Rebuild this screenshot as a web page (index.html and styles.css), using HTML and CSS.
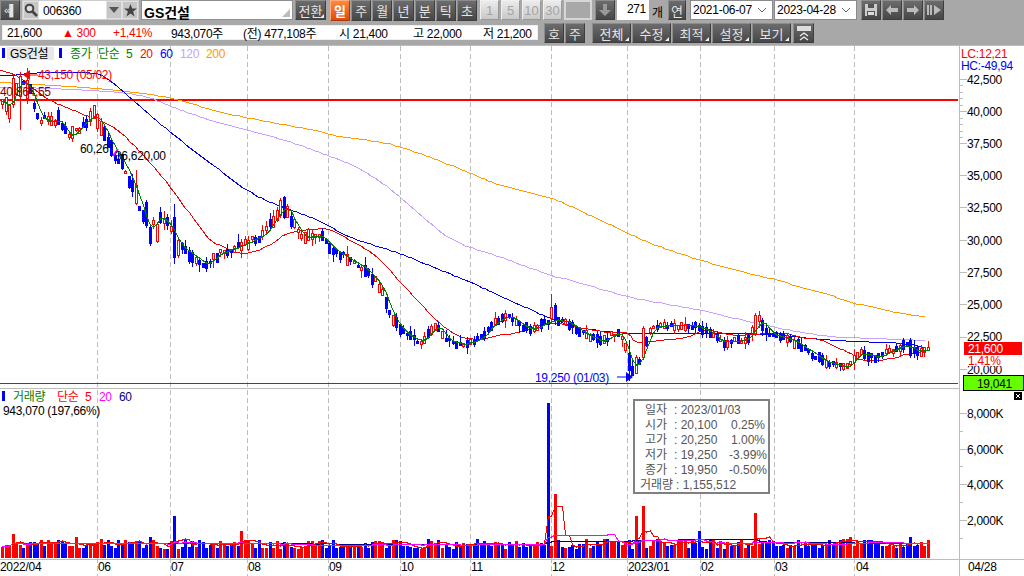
FILE: index.html
```html
<!DOCTYPE html>
<html lang="ko">
<head>
<meta charset="utf-8">
<title>GS건설 차트</title>
<link rel="stylesheet" href="styles.css">
</head>
<body>
<div class="toolbar">
  <div class="row row-top">
    <button class="btn collapse">«▌</button>
    <div class="code">
      <span class="code-icon"><svg width="14" height="14" viewBox="0 0 14 14"><circle cx="5.5" cy="5.5" r="3.8" fill="#ddd" stroke="#444" stroke-width="2"/><path d="M8.5 8.5L13 13" stroke="#444" stroke-width="2.6"/></svg></span>
      <span class="code-text">006360</span>
      <span class="code-icon"><svg width="10" height="6" viewBox="0 0 10 6"><path d="M0 0H10L5 6Z" fill="#555"/></svg></span>
      <span class="code-icon"><svg width="13" height="13" viewBox="0 0 13 13"><path d="M6.5 0L8.2 4.6H13L9.1 7.6L10.6 12.6L6.5 9.6L2.4 12.6L3.9 7.6L0 4.6H4.8Z" fill="#444"/></svg></span>
    </div>
    <div class="name">GS건설<svg class="corner" width="8" height="8" viewBox="0 0 8 8"><path d="M8 0V8H0Z" fill="#bbb"/></svg></div>
    <button class="btn swap">전환<i class="tri"></i></button>
    <div class="periods">
      <button class="btn active">일</button><button class="btn">주</button><button class="btn">월</button><button class="btn">년</button><button class="btn">분</button><button class="btn">틱</button><button class="btn">초</button>
    </div>
    <div class="mins">
      <button class="btn light">1</button><button class="btn light">5</button><button class="btn light">10</button><button class="btn light">30</button>
    </div>
    <div class="blank"></div>
    <button class="btn icon-btn"><svg width="12" height="12" viewBox="0 0 12 12"><path d="M4 0H8V6H12L6 12L0 6H4Z" fill="#999"/></svg></button>
    <div class="count">271</div>
    <span class="unit">개</span>
    <button class="btn yr">연</button>
    <div class="date">2021-06-07<svg width="10" height="6" viewBox="0 0 10 6"><path d="M1 1L5 5L9 1" fill="none" stroke="#666"/></svg></div>
    <div class="date">2023-04-28<svg width="10" height="6" viewBox="0 0 10 6"><path d="M1 1L5 5L9 1" fill="none" stroke="#666"/></svg></div>
    <div class="nav">
      <button class="btn icon-btn"><svg width="12" height="12" viewBox="0 0 12 12"><path d="M0 0H12V12H0Z" fill="#ccc"/><path d="M3 0H9V4H3ZM2 7H10V12H2Z" fill="#555"/><path d="M3 8H9V11H3Z" fill="#ddd"/></svg></button>
      <button class="btn icon-btn"><svg width="12" height="10" viewBox="0 0 12 10"><path d="M0 5L5 0V3H12V7H5V10Z" fill="#bbb"/></svg></button>
      <button class="btn icon-btn"><svg width="12" height="10" viewBox="0 0 12 10"><path d="M12 5L7 0V3H0V7H7V10Z" fill="#bbb"/></svg></button>
      <button class="btn icon-btn"><svg width="14" height="10" viewBox="0 0 14 10"><path d="M0 0H2V10H0ZM3 0H5V10H3ZM7 0L14 5L7 10Z" fill="#bbb"/></svg></button>
    </div>
  </div>
  <div class="row row-bottom">
    <div class="info">
      <span class="f1">21,600</span>
      <span class="f2 up">▲ 300</span>
      <span class="f3 up">+1,41%</span>
      <span class="f4">943,070주</span>
      <span class="f5">(전) 477,108주</span>
      <span class="f6">시 21,400</span>
      <span class="f7">고 22,000</span>
      <span class="f8">저 21,200</span>
    </div>
    <div class="pair">
      <button class="btn">호</button><button class="btn">주</button>
    </div>
    <div class="menus">
      <button class="btn menu">전체<i class="tri"></i></button>
      <button class="btn menu">수정<i class="tri"></i></button>
      <button class="btn menu">최적<i class="tri"></i></button>
      <button class="btn menu">설정<i class="tri"></i></button>
      <button class="btn menu">보기<i class="tri"></i></button>
      <button class="btn fold"><svg width="14" height="15" viewBox="0 0 14 15"><path d="M0 0H14V5H0Z" fill="#ddd"/><path d="M3 10L7 7L11 10M3 14L7 11L11 14" fill="none" stroke="#eee" stroke-width="1.3"/></svg></button>
    </div>
  </div>
</div>

<div class="chart">
  <svg class="plot" width="1024" height="530" viewBox="0 46 1024 530">
    <g class="grid">
      <path d="M97.5 46V576M170.5 46V576M247.5 46V576M328.5 46V576M400.5 46V576M470.5 46V576M551.5 46V576M627.5 46V576M700.5 46V576M774.5 46V576M854.5 46V576"/>
    </g>
    <g class="frame">
      <path d="M0 388.5H959M0 559.5H1024M959.5 46V576"/>
      <path id="ticks" d="M959 79.5H967M959 111.5H967M959 143.5H967M959 175.5H967M959 207.5H967M959 240.5H967M959 272.5H967M959 304.5H967M959 337.5H967M959 369.5H967M959 413.5H967M959 449.5H967M959 484.5H967M959 520.5H967M959 85.5H963M959 92.5H963M959 98.5H963M959 105.5H963M959 118.5H963M959 124.5H963M959 131.5H963M959 137.5H963M959 431.5H963M959 466.5H963M959 502.5H963M959 538.5H963"/>
    </g>
    <path class="hline" d="M0 100H958"/>
    <path class="hline-thin" d="M0 383.5H958"/>
    <polyline class="ma ma200 smooth" points="0,82 50,85 117,90 170,98 220,112 270,122 313,130 333,135 367,140 400,147 450,165 500,185 550,198 600,220 650,243 700,260 750,274 777,280 800,287 830,295 850,302 900,313 925,316"/>
    <polyline class="ma ma120 smooth" points="0,87 50,88 117,92 150,98 180,110 220,123 247,130 283,140 327,155 367,173 400,197 450,238 500,257 550,275 570,280 630,297 700,310 750,322 800,332 830,336 847,337 925,340"/>
    <polyline class="ma ma60 smooth" points="0,75 10,75 50,72 93,73 113,83 133,100 170,132 210,163 247,190 277,205 317,220 350,237 400,254 465,280 500,296 543,315 577,327 627,333 667,333 700,333 767,334 820,339 853,341 880,342 900,343 925,347"/>
    <polyline class="ma ma20 smooth" points="0,70 20,78 50,100 80,113 117,130 150,163 170,187 200,227 213,242 244,253 270,245 287,234 313,229 330,230 353,242 377,257 398,280 420,303 433,317 457,335 480,339 500,335 520,332 550,323 577,327 607,332 627,333 637,342 660,340 687,337 707,330 733,335 753,334 780,333 800,337 820,340 847,352 863,360 887,359 913,353 925,352"/>
    <g id="candles"></g>
    <polyline id="ma5" class="ma ma5" points=""></polyline>
    <g id="volumes"></g>
    <polyline id="vma60" class="ma vma60" points=""></polyline>
    <polyline id="vma5" class="ma vma5" points=""></polyline>
    <polyline id="vma20" class="ma vma20" points=""></polyline>
    <path class="peak-line" d="M113 156L118 149"/>
    <path class="marker red-fill" d="M23 75L30 70V80Z"/>
    <path class="marker-line red-line" d="M30 75H38"/>
    <path class="marker blue-fill" d="M633 377L626 372V382Z"/>
    <path class="marker-line blue-line" d="M617 377H627"/>

    <rect class="swatch" x="2" y="48" width="3" height="10"/>
    <rect class="tag-name" x="7" y="47" width="47" height="13"/>
    <text class="t" x="10" y="58">GS건설</text>
    <rect class="swatch" x="59" y="48" width="3" height="10"/>
    <text class="t green" x="70" y="58">종가</text>
    <text class="t green" x="98" y="58">단순</text>
    <text class="t green" x="126" y="58">5</text>
    <text class="t red" x="140" y="58">20</text>
    <text class="t blue" x="160" y="58">60</text>
    <text class="t purple" x="180" y="58">120</text>
    <text class="t orange" x="206" y="58">200</text>

    <text class="t red" x="38" y="79">43,150 (05/02)</text>
    <text class="t maroon" x="0" y="96">40,864,55</text>
    <text class="t" x="80" y="153">60,26°</text>
    <text class="t" x="115" y="160">36,620,00</text>
    <text class="t blue" x="535" y="382">19,250 (01/03)</text>

    <text class="t red" x="961" y="58">LC:12,21</text>
    <text class="t blue" x="961" y="70">HC:-49,94</text>
    <text class="t" x="967" y="84">42,500</text>
    <text class="t" x="967" y="116">40,000</text>
    <text class="t" x="967" y="148">37,500</text>
    <text class="t" x="967" y="180">35,000</text>
    <text class="t" x="967" y="212">32,500</text>
    <text class="t" x="967" y="245">30,000</text>
    <text class="t" x="967" y="277">27,500</text>
    <text class="t" x="967" y="309">25,000</text>
    <text class="t" x="967" y="341">22,500</text>
    <text class="t" x="967" y="374">20,000</text>

    <rect class="price-tag" x="964" y="342" width="58" height="13"/>
    <text class="t white" x="968" y="353">21,600</text>
    <rect class="tag-bg" x="964" y="355" width="58" height="11"/>
    <text class="t red" x="968" y="365">1,41%</text>
    <rect class="green-tag" x="963.5" y="375.5" width="60" height="15"/>
    <text class="t" x="977" y="388">19,041</text>
    <rect class="closer" x="1014" y="392" width="8" height="8"/>
    <path class="closer-x" d="M1016 394L1020 398M1020 394L1016 398"/>

    <rect class="swatch" x="2" y="391" width="3" height="10"/>
    <text class="t green" x="13" y="401">거래량</text>
    <text class="t red" x="57" y="401">단순</text>
    <text class="t red" x="85" y="401">5</text>
    <text class="t magenta" x="99" y="401">20</text>
    <text class="t navy" x="119" y="401">60</text>
    <text class="t" x="3" y="415">943,070 (197,66%)</text>

    <text class="t" x="967" y="418">8,000K</text>
    <text class="t" x="967" y="454">6,000K</text>
    <text class="t" x="967" y="489">4,000K</text>
    <text class="t" x="967" y="525">2,000K</text>

    <text class="t" x="0" y="571">2022/04</text>
    <text class="t" x="98" y="571">06</text>
    <text class="t" x="171" y="571">07</text>
    <text class="t" x="248" y="571">08</text>
    <text class="t" x="329" y="571">09</text>
    <text class="t" x="401" y="571">10</text>
    <text class="t" x="471" y="571">11</text>
    <text class="t" x="552" y="571">12</text>
    <text class="t" x="628" y="571">2023/01</text>
    <text class="t" x="701" y="571">02</text>
    <text class="t" x="775" y="571">03</text>
    <text class="t" x="856" y="571">04</text>
    <text class="t" x="968" y="571">04/28</text>
  </svg>

  <div class="tooltip">
    <div class="tip-row"><span class="tip-k">일자</span><span>: 2023/01/03</span></div>
    <div class="tip-row"><span class="tip-k">시가</span><span>: 20,100</span><span class="tip-p">0.25%</span></div>
    <div class="tip-row"><span class="tip-k">고가</span><span>: 20,250</span><span class="tip-p">1.00%</span></div>
    <div class="tip-row"><span class="tip-k">저가</span><span>: 19,250</span><span class="tip-p">-3.99%</span></div>
    <div class="tip-row"><span class="tip-k">종가</span><span>: 19,950</span><span class="tip-p">-0.50%</span></div>
    <div class="tip-row tip-vol"><span>거래량</span><span>: 1,155,512</span></div>
  </div>
</div>
<script src="chart.js"></script>
</body>
</html>
```
FILE: styles.css
```css
* { box-sizing: border-box; }
html, body { margin: 0; padding: 0; }
body {
  width: 1024px;
  height: 576px;
  overflow: hidden;
  background: #fff;
  font-family: "Liberation Sans", "Noto Sans CJK KR", sans-serif;
  font-size: 12px;
  color: #000;
}
button { font: inherit; padding: 0; margin: 0; }

.toolbar { height: 46px; background: #a8a8a8; border-bottom: 1px solid #bcbcbc; }
.row { display: flex; align-items: stretch; }
.row-top { height: 20px; }
.row-bottom { height: 20px; margin-top: 3px; }

.btn {
  position: relative;
  display: flex;
  align-items: center;
  justify-content: center;
  width: 20px;
  color: #e4e4e4;
  font-size: 13px;
  background: linear-gradient(#6c6c6c, #474747);
  border: 1px solid #8a8a8a;
  border-color: #8c8c8c #3e3e3e #3e3e3e #8c8c8c;
}
.tri {
  position: absolute;
  right: 1px;
  bottom: 1px;
  width: 0;
  height: 0;
  border-left: 4px solid transparent;
  border-bottom: 4px solid #eee;
}
.collapse { width: 20px; font-size: 11px; letter-spacing: -1px; margin-right: 2px; }
.code {
  display: flex;
  align-items: stretch;
  width: 117px;
  margin-right: 2px;
  background: #fff;
  border: 1px solid #ccc;
}
.code-icon {
  display: flex;
  align-items: center;
  justify-content: center;
  width: 16px;
  background: #c6c6c6;
  border: 1px solid #e0e0e0;
}
.code-text { flex: 1; padding: 3px 0 0 4px; letter-spacing: -0.3px; }
.name {
  position: relative;
  width: 152px;
  margin-right: 2px;
  padding: 1px 0 0 2px;
  background: #fff;
  font-size: 14px;
  font-weight: bold;
  border: 1px solid #909090;
}
.corner { position: absolute; right: 2px; bottom: 2px; }
.swap { width: 31px; margin-right: 4px; }
.periods { display: grid; grid-template-columns: repeat(7, 1fr); gap: 1px; width: 147px; margin-right: 3px; }
.periods .btn { width: auto; }
.active { background: linear-gradient(#ff8a3c, #e2480e); border-color: #ffb078 #a83a08 #a83a08 #ffb078; color: #fff; font-weight: bold; }
.mins { display: grid; grid-template-columns: repeat(4, 1fr); gap: 2px; width: 82px; margin-right: 2px; }
.light { width: auto; color: #a4a4a4; background: linear-gradient(#ececec, #c8c8c8); border-color: #f0f0f0 #999 #999 #f0f0f0; }
.blank { width: 28px; margin-right: 3px; background: #a8a8a8; border: 2px solid #d6d6d6; }
.icon-btn { width: 20px; }
.count { width: 32px; margin: 0 0 0 2px; padding: 2px 3px 0 0; background: #fff; text-align: right; letter-spacing: -0.3px; }
.unit { width: 19px; padding: 3px 0 0 3px; }
.yr { width: 18px; margin-right: 4px; }
.date {
  display: flex;
  align-items: center;
  justify-content: space-between;
  width: 83px;
  padding: 0 5px 0 2px;
  background: #fff;
  border: 1px solid #8a8a8a;
  letter-spacing: -0.25px;
}
.date + .date { margin-left: 1px; }
.nav { display: flex; gap: 1px; margin-left: 4px; }

.row-bottom { padding-left: 2px; }
.info {
  display: flex;
  align-items: center;
  width: 536px;
  height: 15px;
  margin-top: 2px;
  padding-left: 4px;
  background: #fff;
  border: 1px solid #eee;
  letter-spacing: -0.3px;
  white-space: nowrap;
}
.up { color: #f00; }
.f1 { width: 55px; }
.f2 { width: 51px; }
.f3 { width: 58px; }
.f4 { width: 72px; }
.f5 { width: 96px; }
.f6 { width: 74px; }
.f7 { width: 70px; }
.pair { display: flex; gap: 1px; margin-left: 6px; }
.menus { display: flex; gap: 1px; margin-left: 7px; }
.menu { width: 39px; }
.fold { width: 21px; margin-left: 1px; }

.chart { position: relative; height: 530px; }
.plot { display: block; }
.grid path { fill: none; stroke: #bdbdbd; stroke-dasharray: 5 3; }
.frame path { fill: none; stroke: #bcbcbc; }
.hline { stroke: #f00; stroke-width: 2; shape-rendering: crispEdges; }
.hline-thin { stroke: #e00; stroke-width: 1; shape-rendering: crispEdges; }
.ma { fill: none; stroke-width: 1; shape-rendering: crispEdges; }
.ma200 { stroke: #ff9a00; }
.ma120 { stroke: #c8a0ff; }
.ma60 { stroke: #0000f0; }
.ma20 { stroke: #f00000; }
.ma5 { stroke: #008000; }
.vma5 { stroke: #f00; }
.vma20 { stroke: #ff00ff; }
.vma60 { stroke: #000090; }
.wick { stroke-width: 1; shape-rendering: crispEdges; }
.b-up { fill: #fff; stroke: #f00; shape-rendering: crispEdges; }
.b-dn { fill: #00f; stroke: #00f; shape-rendering: crispEdges; }
.w-up { stroke: #f00; }
.w-dn { stroke: #00f; }
.v-up { fill: #f00; shape-rendering: crispEdges; }
.v-dn { fill: #00f; shape-rendering: crispEdges; }
.peak-line { stroke: #ff00ff; stroke-width: 2; }
.red-fill { fill: #f00; }
.blue-fill { fill: #00f; }
.red-line { stroke: #f00; }
.blue-line { stroke: #00f; }
.swatch { fill: #00f; }
.tag-name { fill: #e8e8e8; }

.t {
  font-family: "Liberation Sans", "Noto Sans CJK KR", sans-serif;
  font-size: 12px;
  letter-spacing: -0.3px;
  fill: #000;
}
.t.red { fill: #f00; }
.t.blue { fill: #00f; }
.t.green { fill: #008000; }
.t.purple { fill: #c8a0ff; }
.t.orange { fill: #ff9a00; }
.t.maroon { fill: #800000; }
.t.magenta { fill: #ff00ff; }
.t.navy { fill: #000090; }
.t.white { fill: #fff; }
.price-tag { fill: #f00; }
.tag-bg { fill: #fff; }
.green-tag { fill: #66ff00; stroke: #000; }
.closer { fill: #000; }
.closer-x { stroke: #fff; fill: none; }

.tooltip {
  position: absolute;
  left: 633px;
  top: 353px;
  width: 137px;
  height: 95px;
  padding: 2px 0 0 5px;
  background: #fff;
  border: 2px solid #808080;
  color: #555;
  font-size: 12px;
}
.tip-row { display: flex; height: 15px; line-height: 15px; white-space: nowrap; }
.tip-k { width: 32px; padding-left: 5px; letter-spacing: 0; }
.tip-row > span:nth-child(2) { width: 57px; padding-left: 2px; }
.tip-p { width: 36px; text-align: right; }
.tip-vol > span:first-child { width: 36px; }
.tip-vol > span:nth-child(2) { width: 80px; padding-left: 0; }
```
FILE: chart.js
```js
(function () {
  var NS = "http://www.w3.org/2000/svg";
  var seed = 20230428;
  function rnd() { seed = (seed * 1664525 + 1013904223) % 4294967296; return seed / 4294967296; }
  var path = [[0,100],[8,108],[14,85],[22,82],[30,92],[36,115],[45,122],[60,120],[66,140],[80,125],[92,113],[100,125],[112,150],[125,170],[135,195],[148,235],[155,215],[168,225],[176,245],[190,255],[205,265],[215,255],[240,245],[262,235],[275,215],[284,205],[293,225],[302,238],[318,235],[330,248],[345,258],[365,270],[378,285],[392,320],[405,335],[420,342],[435,325],[445,340],[460,345],[480,338],[490,325],[505,315],[520,325],[530,330],[550,320],[565,322],[585,335],[600,342],[615,332],[622,340],[630,370],[638,360],[650,328],[665,325],[690,325],[705,330],[720,342],[745,340],[758,320],[770,335],[790,340],[805,350],[825,362],[845,368],[858,352],[875,358],[890,350],[905,345],[915,352],[925,350]];
  function at(x) {
    for (var i = 1; i < path.length; i++) {
      if (x <= path[i][0]) {
        var a = path[i - 1], b = path[i];
        return a[1] + (b[1] - a[1]) * (x - a[0]) / (b[0] - a[0]);
      }
    }
    return path[path.length - 1][1];
  }
  var spikes = { 13: 534, 173: 516, 240: 531, 548: 403, 553: 494, 635: 516, 643: 506, 698: 531, 755: 513, 75: 537, 148: 537, 850: 537, 910: 537 };
  /* hand-read candles: x -> [wickTop, bodyTop, bodyBottom, wickBottom, up] */
  var fixed = {
    12: [74, 78, 104, 108, 1], 19: [72, 76, 96, 130, 1], 26: [68, 80, 98, 104, 1],
    134: [170, 185, 203, 205, 1], 145: [200, 202, 225, 228, 0], 150: [225, 227, 243, 246, 0], 155: [222, 224, 241, 243, 1],
    174: [204, 217, 257, 264, 0], 178: [238, 240, 255, 258, 1],
    280: [198, 200, 215, 218, 1], 284: [196, 197, 217, 219, 0],
    550: [294, 307, 318, 322, 1], 555: [303, 305, 320, 325, 0],
    628: [340, 353, 370, 381, 0], 636: [355, 357, 373, 374, 1], 643: [326, 328, 357, 360, 1],
    755: [313, 315, 333, 336, 1], 760: [318, 320, 330, 336, 0], 908: [338, 340, 355, 358, 0]
  };
  function el(parent, name, cls, attrs) {
    var e = document.createElementNS(NS, name);
    e.setAttribute("class", cls);
    for (var k in attrs) e.setAttribute(k, attrs[k]);
    parent.appendChild(e);
    return e;
  }
  /* turn hand-read control points into a smooth line */
  function smooth(points) {
    var p = points.trim().split(/\s+/).map(function (s) { return s.split(",").map(Number); });
    var out = [];
    for (var i = 0; i < p.length - 1; i++) {
      var a = p[Math.max(0, i - 1)], b = p[i], c = p[i + 1], d = p[Math.min(p.length - 1, i + 2)];
      var steps = Math.max(2, Math.round((c[0] - b[0]) / 4));
      for (var s = 0; s < steps; s++) {
        var t = s / steps, t2 = t * t, t3 = t2 * t;
        var f = function (k) {
          return 0.5 * (2 * b[k] + (c[k] - a[k]) * t + (2 * a[k] - 5 * b[k] + 4 * c[k] - d[k]) * t2 + (3 * b[k] - a[k] - 3 * c[k] + d[k]) * t3);
        };
        out.push(Math.round(f(0)) + "," + Math.round(f(1)));
      }
    }
    out.push(p[p.length - 1].join(","));
    return out.join(" ");
  }
  Array.prototype.forEach.call(document.querySelectorAll(".smooth"), function (e) {
    e.setAttribute("points", smooth(e.getAttribute("points")));
  });

  var gc = document.getElementById("candles");
  var gv = document.getElementById("volumes");
  var n = 264, pitch = 3.52, closes = [], vols = [], xs = [];
  for (var i = 0; i < n; i++) {
    var x = Math.round(1 + i * pitch);
    var amp = x < 150 ? 8 : x < 400 ? 5.5 : 4;
    var line = at(x);
    var mid = line + (rnd() - 0.5) * amp;
    var slope = at(x + 4) - at(x - 4);
    var up = rnd() < (slope > 0 ? 0.3 : 0.68);
    var h = Math.round(2 + rnd() * amp * 1.7);
    var top = Math.round(mid - h / 2), bot = top + h;
    var wt = top - Math.round(rnd() * rnd() * 9), wb = bot + Math.round(rnd() * rnd() * 10);
    for (var k in fixed) {
      if (Math.abs(x - k) < 2) {
        var c = fixed[k];
        wt = c[0]; top = c[1]; bot = c[2]; wb = c[3]; up = !!c[4]; h = bot - top;
      }
    }
    if (bot - top < 1) bot = top + 1;
    var s = up ? "up" : "dn";
    el(gc, "path", "wick w-" + s, { d: "M" + (x + 1.5) + " " + wt + "V" + wb });
    el(gc, "rect", "b-" + s, { x: x + 0.5, y: top + 0.5, width: 2, height: bot - top });
    closes.push(line);
    xs.push(x + 1.5);

    var vh = 9 + rnd() * 10;
    for (var sk in spikes) {
      if (Math.abs(x - sk) < 2) vh = 558 - spikes[sk];
    }
    if (Math.abs(x - 548) < 2 || Math.abs(x - 173) < 2) s = "dn";
    if (Math.abs(x - 553) < 2 || Math.abs(x - 635) < 2 || Math.abs(x - 643) < 2 || Math.abs(x - 755) < 2) s = "up";
    el(gv, "rect", "v-" + s, { x: x, y: 558 - vh, width: 3, height: vh });
    vols.push(vh);
  }
  function ma(arr, len) {
    var out = [];
    for (var i = 0; i < arr.length; i++) {
      var from = Math.max(0, i - len + 1), sum = 0;
      for (var j = from; j <= i; j++) sum += arr[j];
      out.push(sum / (i - from + 1));
    }
    return out;
  }
  function pts(vals, f) {
    return vals.map(function (v, i) { return xs[i] + "," + Math.round(f(v)); }).join(" ");
  }
  document.getElementById("ma5").setAttribute("points", pts(ma(closes, 3), function (v) { return v; }));
  var base = function (v) { return 558 - v; };
  document.getElementById("vma5").setAttribute("points", pts(ma(vols, 5), base));
  document.getElementById("vma20").setAttribute("points", pts(ma(vols, 20), base));
  document.getElementById("vma60").setAttribute("points", pts(ma(vols, 60), base));
})();
```
